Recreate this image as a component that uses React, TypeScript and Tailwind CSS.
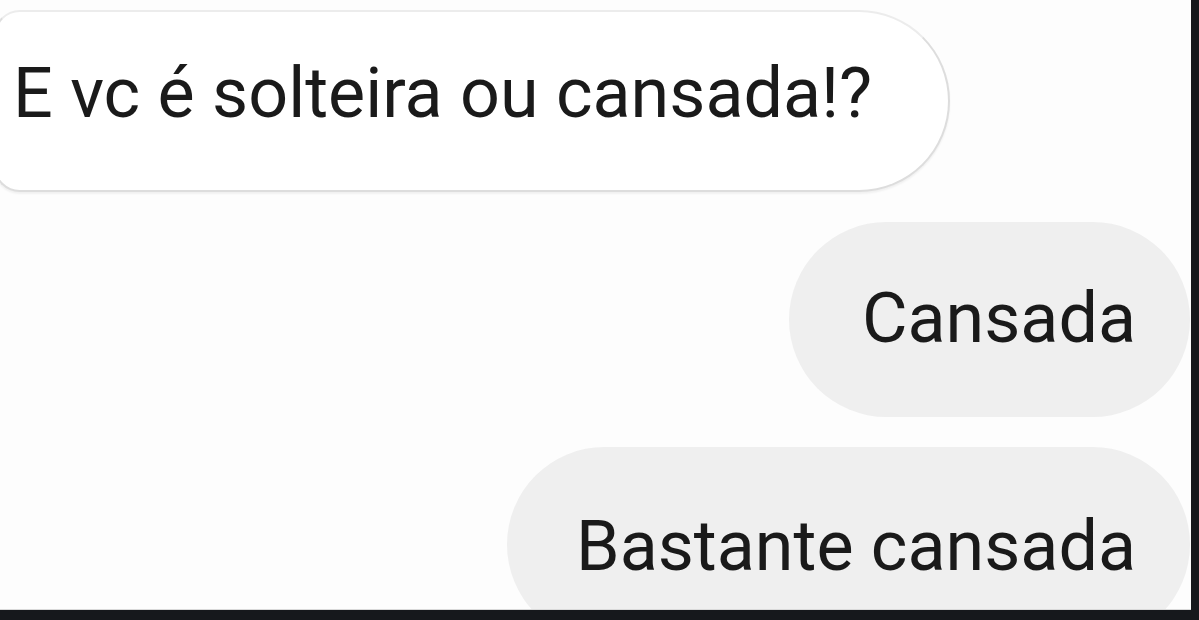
export default function App() {
  return (
    <div className="w-[1199px] h-[620px] bg-[#16181c] flex items-start overflow-hidden">
      <div
        className="w-[1191px] h-[610px] bg-[#fdfdfd] border-b border-[#d9d9d9] overflow-hidden flex flex-col text-[#1a1a1a]"
        style={{ fontFamily: 'Roboto, "Noto Sans", Arial, sans-serif' }}
      >
        {/* incoming message */}
        <div className="self-start mt-[10px] -ml-[6px] pl-[17px] pr-[76px] pt-[46px] pb-[62px] bg-white border-[2px] border-[#dddddd] border-t-[#ececec] rounded-l-[26px] rounded-r-[92px] shadow-[0_2px_2px_rgba(0,0,0,0.05)]">
          <p className="text-[70px] leading-[70px] whitespace-nowrap">E vc é solteira ou cansada!?</p>
        </div>

        {/* outgoing messages */}
        <div className="self-end mt-[30px] mr-px pl-[73px] pr-[54px] pt-[61px] pb-[64px] bg-[#efefef] rounded-[98px]">
          <p className="text-[70px] leading-[70px] whitespace-nowrap">Cansada</p>
        </div>
        <div className="self-end mt-[30px] mr-px pl-[69px] pr-[54px] pt-[64px] pb-[61px] bg-[#efefef] rounded-[98px]">
          <p className="text-[70px] leading-[70px] whitespace-nowrap">Bastante cansada</p>
        </div>
      </div>
    </div>
  );
}
